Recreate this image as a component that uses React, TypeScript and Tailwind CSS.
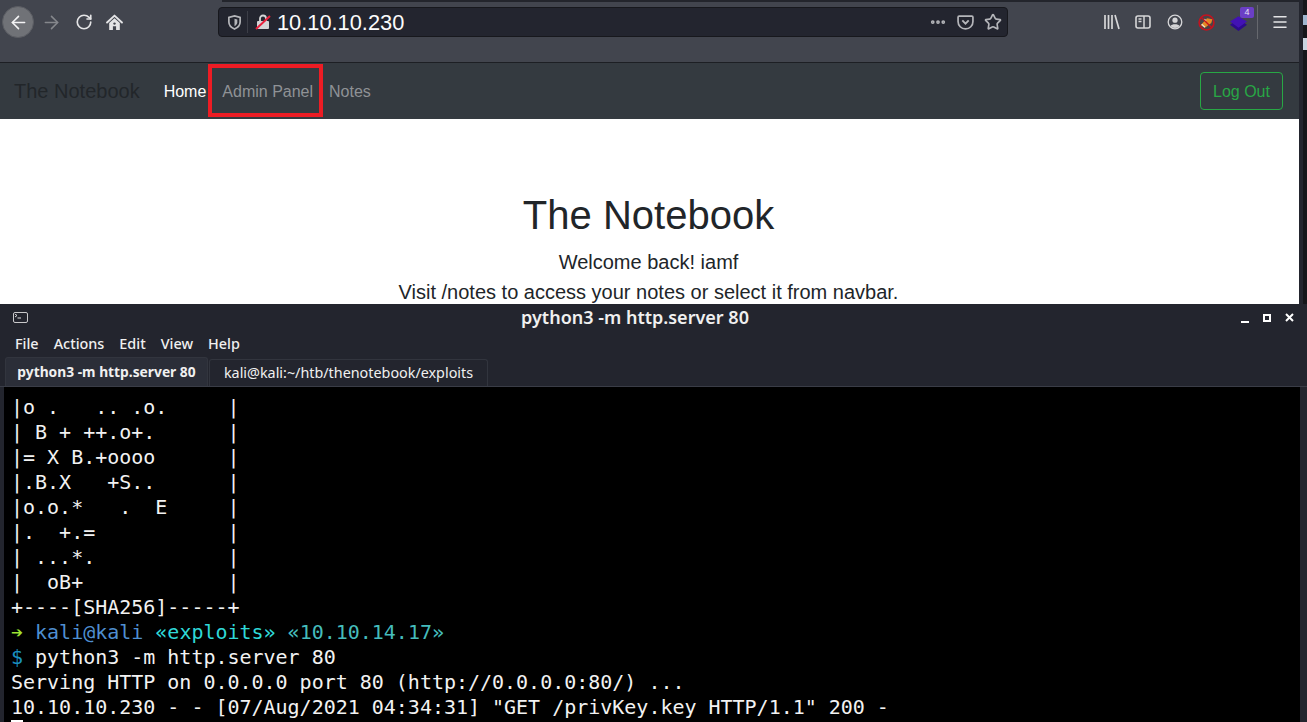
import { RotateCw, ArrowLeft, ArrowRight, MoreHorizontal, Star, Menu } from "lucide-react";

const art = [
  "|o .   .. .o.     |",
  "| B + ++.o+.      |",
  "|= X B.+oooo      |",
  "|.B.X   +S..      |",
  "|o.o.*   .  E     |",
  "|.  +.=           |",
  "| ...*.           |",
  "|  oB+            |",
  "+----[SHA256]-----+",
];

function BrowserBar() {
  return (
    <div className="relative flex h-[63px] shrink-0 border-b border-[#1d1f24] bg-[#42454e]">
      <div className="absolute left-[222px] right-0 top-0 h-[2px] bg-[#23252c]" />
      <div className="flex h-[44px] w-[218px] shrink-0 items-center pl-[2px]">
        <div className="grid h-[32px] w-[32px] place-items-center rounded-full border border-[#5b5d63] bg-[#707277]">
          <ArrowLeft className="h-[21px] w-[21px] text-[#f4f4f5]" strokeWidth={1.800} />
        </div>
        <ArrowRight className="ml-[7px] h-[21px] w-[21px] text-[#85878c]" strokeWidth={1.800} />
        <RotateCw className="ml-[13px] h-[18px] w-[18px] text-[#e4e4e6]" strokeWidth={2.200} />
        <svg className="ml-[13px] h-[17px] w-[17px]" viewBox="0 0 16 16">
          <path d="M1 8l7-6.500L15 8" fill="none" stroke="#e4e4e6" strokeWidth="1.800" strokeLinecap="round" strokeLinejoin="round" />
          <path d="M3 8.500L8 4l5 4.500V15H9.500v-3.500h-3V15H3z" fill="#e4e4e6" />
          <circle cx="8" cy="9" r="1.100" fill="#42454e" />
        </svg>
      </div>
      <div className="mt-[7px] flex h-[30px] w-[790px] items-center rounded-[4px] border border-[#17181d] bg-[#23252f]">
        <svg className="ml-[8px] h-[15px] w-[15px]" viewBox="0 0 16 16">
          <path d="M8 1l6 1.500v5c0 3.500-2.500 6-6 7.500-3.500-1.500-6-4-6-7.500v-5z" fill="none" stroke="#b5b6ba" strokeWidth="1.800" />
          <path d="M8 4l3 .8v3c0 2-1.300 3.200-3 4.200z" fill="#b5b6ba" />
        </svg>
        <div className="ml-[5px] h-[22px] w-px bg-[#3c3e47]" />
        <svg className="ml-[7px] h-[16px] w-[16px]" viewBox="0 0 16 16">
          <rect x="2" y="7" width="12" height="8" rx="1" fill="#d4d4d6" />
          <path d="M5 7V4.500a3 3 0 016 0V7" fill="none" stroke="#d4d4d6" strokeWidth="1.800" />
          <path d="M1 15L15 2" stroke="#e8203c" strokeWidth="2" />
        </svg>
        <span className="ml-[6px] mt-[2px] font-['Liberation_Sans',sans-serif] text-[21.800px] leading-none text-[#fbfbfb]">10.10.10.230</span>
        <div className="ml-auto flex items-center gap-[10px] pr-[5px]">
          <MoreHorizontal className="h-[18px] w-[18px] text-[#b5b6ba]" strokeWidth={3} />
          <svg className="h-[17px] w-[17px]" viewBox="0 0 16 16">
            <path d="M2 2h12a1 1 0 011 1v4c0 4-3 7-7 7s-7-3-7-7V3a1 1 0 011-1z" fill="none" stroke="#b5b6ba" strokeWidth="1.600" />
            <path d="M5 6l3 3 3-3" fill="none" stroke="#b5b6ba" strokeWidth="1.800" />
          </svg>
          <Star className="h-[18px] w-[18px] text-[#b5b6ba]" strokeWidth={2.200} />
        </div>
      </div>
      <div className="flex h-[44px] flex-1 items-center pl-[96px]">
        <svg className="h-[16px] w-[16px]" viewBox="0 0 16 16">
          <path d="M1 1v14M4.500 1v14M8 1v14M11 1l4 14" stroke="#d6d6d8" strokeWidth="1.700" fill="none" />
        </svg>
        <svg className="ml-[15px] h-[16px] w-[16px]" viewBox="0 0 16 16">
          <rect x="1" y="2" width="14" height="12" rx="2" fill="none" stroke="#d6d6d8" strokeWidth="1.600" />
          <path d="M9 2v12M3.500 5h3M3.500 7.500h3" stroke="#d6d6d8" strokeWidth="1.500" />
        </svg>
        <svg className="ml-[16px] h-[16px] w-[16px]" viewBox="0 0 16 16">
          <circle cx="8" cy="8" r="6.800" fill="none" stroke="#d6d6d8" strokeWidth="1.300" />
          <circle cx="8" cy="6.200" r="2.600" fill="#d6d6d8" />
          <path d="M3.500 12c1-2.500 8-2.500 9 0-2 2.500-7 2.500-9 0z" fill="#d6d6d8" />
        </svg>
        <svg className="ml-[15px] h-[17px] w-[17px]" viewBox="0 0 16 16">
          <circle cx="8" cy="8" r="7" fill="#4a4247" stroke="#c4121f" strokeWidth="1.500" />
          <path d="M2.500 10.500l6-6.500 5 1-1 3.500-6 4.500z" fill="#e48a25" />
          <path d="M3.500 9.500l3 3M6 5l1.500 1.500" stroke="#e9e2d8" strokeWidth="1.200" />
          <path d="M3 3l10 10" stroke="#c4121f" strokeWidth="1.300" />
        </svg>
        <div className="relative ml-[15px] h-[17px] w-[17px]">
          <svg className="h-[17px] w-[17px]" viewBox="0 0 16 16">
            <path d="M8 5l8 5-8 6-8-6z" fill="#2c0a8c" />
            <path d="M8 2l8 5-8 6-8-6z" fill="#4212b4" />
          </svg>
          <span className="absolute left-[10px] top-[-7px] grid h-[11px] w-[14px] place-items-center rounded-[2px] bg-[#6b3fc6] font-['Liberation_Sans',sans-serif] text-[9px] leading-none text-[#e6e0f5]">4</span>
        </div>
        <div className="ml-[10px] h-[34px] w-px bg-[#66686e]" />
        <Menu className="ml-[13px] h-[18px] w-[18px] text-[#e4e4e6]" strokeWidth={2} />
      </div>
    </div>
  );
}

function Navbar() {
  return (
    <div className="flex h-[56px] shrink-0 items-center bg-[#343a40] pl-[14px] pr-[16px] font-['Liberation_Sans',sans-serif]">
      <span className="text-[20px] text-[#22262a]">The Notebook</span>
      <span className="ml-[24px] pt-[2px] text-[16px] text-white">Home</span>
      <div className="relative ml-[16px] pt-[2px] text-[16px] text-[#8f9296]">
        Admin Panel
        <div className="absolute left-[-14px] top-[-14px] h-[53px] w-[115px] border-[4px] border-[#ed1c24]" />
      </div>
      <span className="ml-[16px] pt-[2px] text-[16px] text-[#8f9296]">Notes</span>
      <div className="ml-auto flex h-[38px] w-[83px] items-center justify-center rounded-[4px] border border-[#28a745] pt-[2px] text-[16px] text-[#28a745]">Log Out</div>
    </div>
  );
}

function Terminal() {
  return (
    <div className="flex flex-1 flex-col overflow-hidden rounded-t-[3px] bg-[#23252e] font-['Noto_Sans',sans-serif] text-[#f0f0f0]">
      <div className="flex h-[27px] shrink-0 items-center pl-[13px] pr-[13px]">
        <div className="relative h-[11px] w-[15px] rounded-[2px] border border-[#c9c9cb] bg-[#23252e]">
          <svg className="absolute left-[1px] top-[1px] h-[5px] w-[6px]" viewBox="0 0 6 5">
            <path d="M0 0l2 1.500L0 3M2.500 4H6" fill="none" stroke="#e0e0e0" strokeWidth="1" />
          </svg>
        </div>
        <span className="flex-1 pl-[1px] text-center text-[18px] font-semibold text-[#f0f0f0]">python3 -m http.server 80</span>
        <div className="flex items-center">
          <div className="mt-[8px] h-[2px] w-[8px] bg-white" />
          <div className="ml-[14px] h-[8px] w-[8px] border-[2px] border-white" />
          <svg className="ml-[14px] h-[9px] w-[9px]" viewBox="0 0 9 9">
            <path d="M1 1l7 7M8 1L1 8" stroke="white" strokeWidth="2" />
          </svg>
        </div>
      </div>
      <div className="flex h-[26px] shrink-0 items-center gap-[15px] pl-[15px] text-[14.400px] font-medium">
        <span>File</span>
        <span>Actions</span>
        <span>Edit</span>
        <span>View</span>
        <span>Help</span>
      </div>
      <div className="flex h-[30px] shrink-0 items-end border-b border-[#3a3d47] pl-[5px]">
        <div className="flex h-[29px] w-[203px] items-center justify-center rounded-t-[3px] border border-b-0 border-[#32353e] bg-[#2b2e38] text-[13.800px] font-bold">python3 -m http.server 80</div>
        <div className="ml-[1px] flex h-[27px] w-[279px] items-center justify-center rounded-t-[3px] border border-b-0 border-[#32353e] text-[14.350px]">kali@kali:~/htb/thenotebook/exploits</div>
      </div>
      <div className="ml-[4px] mr-[7px] flex-1 overflow-hidden whitespace-pre bg-black pl-[7px] pt-[8px] font-['DejaVu_Sans_Mono',monospace] text-[20px] leading-[25px] tracking-[-0.015px] text-[#f2f2f2]">
        {art.map((line) => (
          <div key={line}>{line}</div>
        ))}
        <div>
          <span className="text-[#9fe332]">{"➔ "}</span>
          <span className="text-[#4f8fd0]">kali@kali </span>
          <span className="text-[#2fd8d8]">«exploits»</span>
          <span className="text-[#45bcbc]"> «10.10.14.17»</span>
        </div>
        <div>
          <span className="text-[#1a8fc0]">$ </span>python3 -m http.server 80
        </div>
        <div>Serving HTTP on 0.0.0.0 port 80 (http://0.0.0.0:80/) ...</div>
        <div>10.10.10.230 - - [07/Aug/2021 04:34:31] "GET /privKey.key HTTP/1.1" 200 -</div>
        <div className="h-[25px] w-[12px] bg-white" />
      </div>
    </div>
  );
}

export default function App() {
  return (
    <div className="flex h-[722px] w-[1307px] flex-col overflow-hidden bg-[#23252e]">
      <div className="flex h-[304px] shrink-0">
        <div className="flex h-full min-w-0 flex-1 flex-col overflow-hidden bg-white">
          <BrowserBar />
          <Navbar />
          <div className="flex flex-col items-center pr-[2px] pt-[72px] font-['Liberation_Sans',sans-serif] text-[#212529]">
            <h1 className="text-[40px] leading-[48px]">The Notebook</h1>
            <p className="mt-[8px] text-[20px] leading-[30px]">Welcome back! iamf</p>
            <p className="text-[20px] leading-[30px]">Visit /notes to access your notes or select it from navbar.</p>
          </div>
        </div>
        <div className="flex w-[8px] shrink-0 justify-end bg-[#23252e]">
          <div className="w-[4px] bg-[#15161a] pt-[15px]">
            <div className="h-[10px] bg-[#9fb6cf]" />
            <div className="mt-[13px] h-[12px] bg-[#c9d4e0]" />
          </div>
        </div>
      </div>
      <Terminal />
    </div>
  );
}
